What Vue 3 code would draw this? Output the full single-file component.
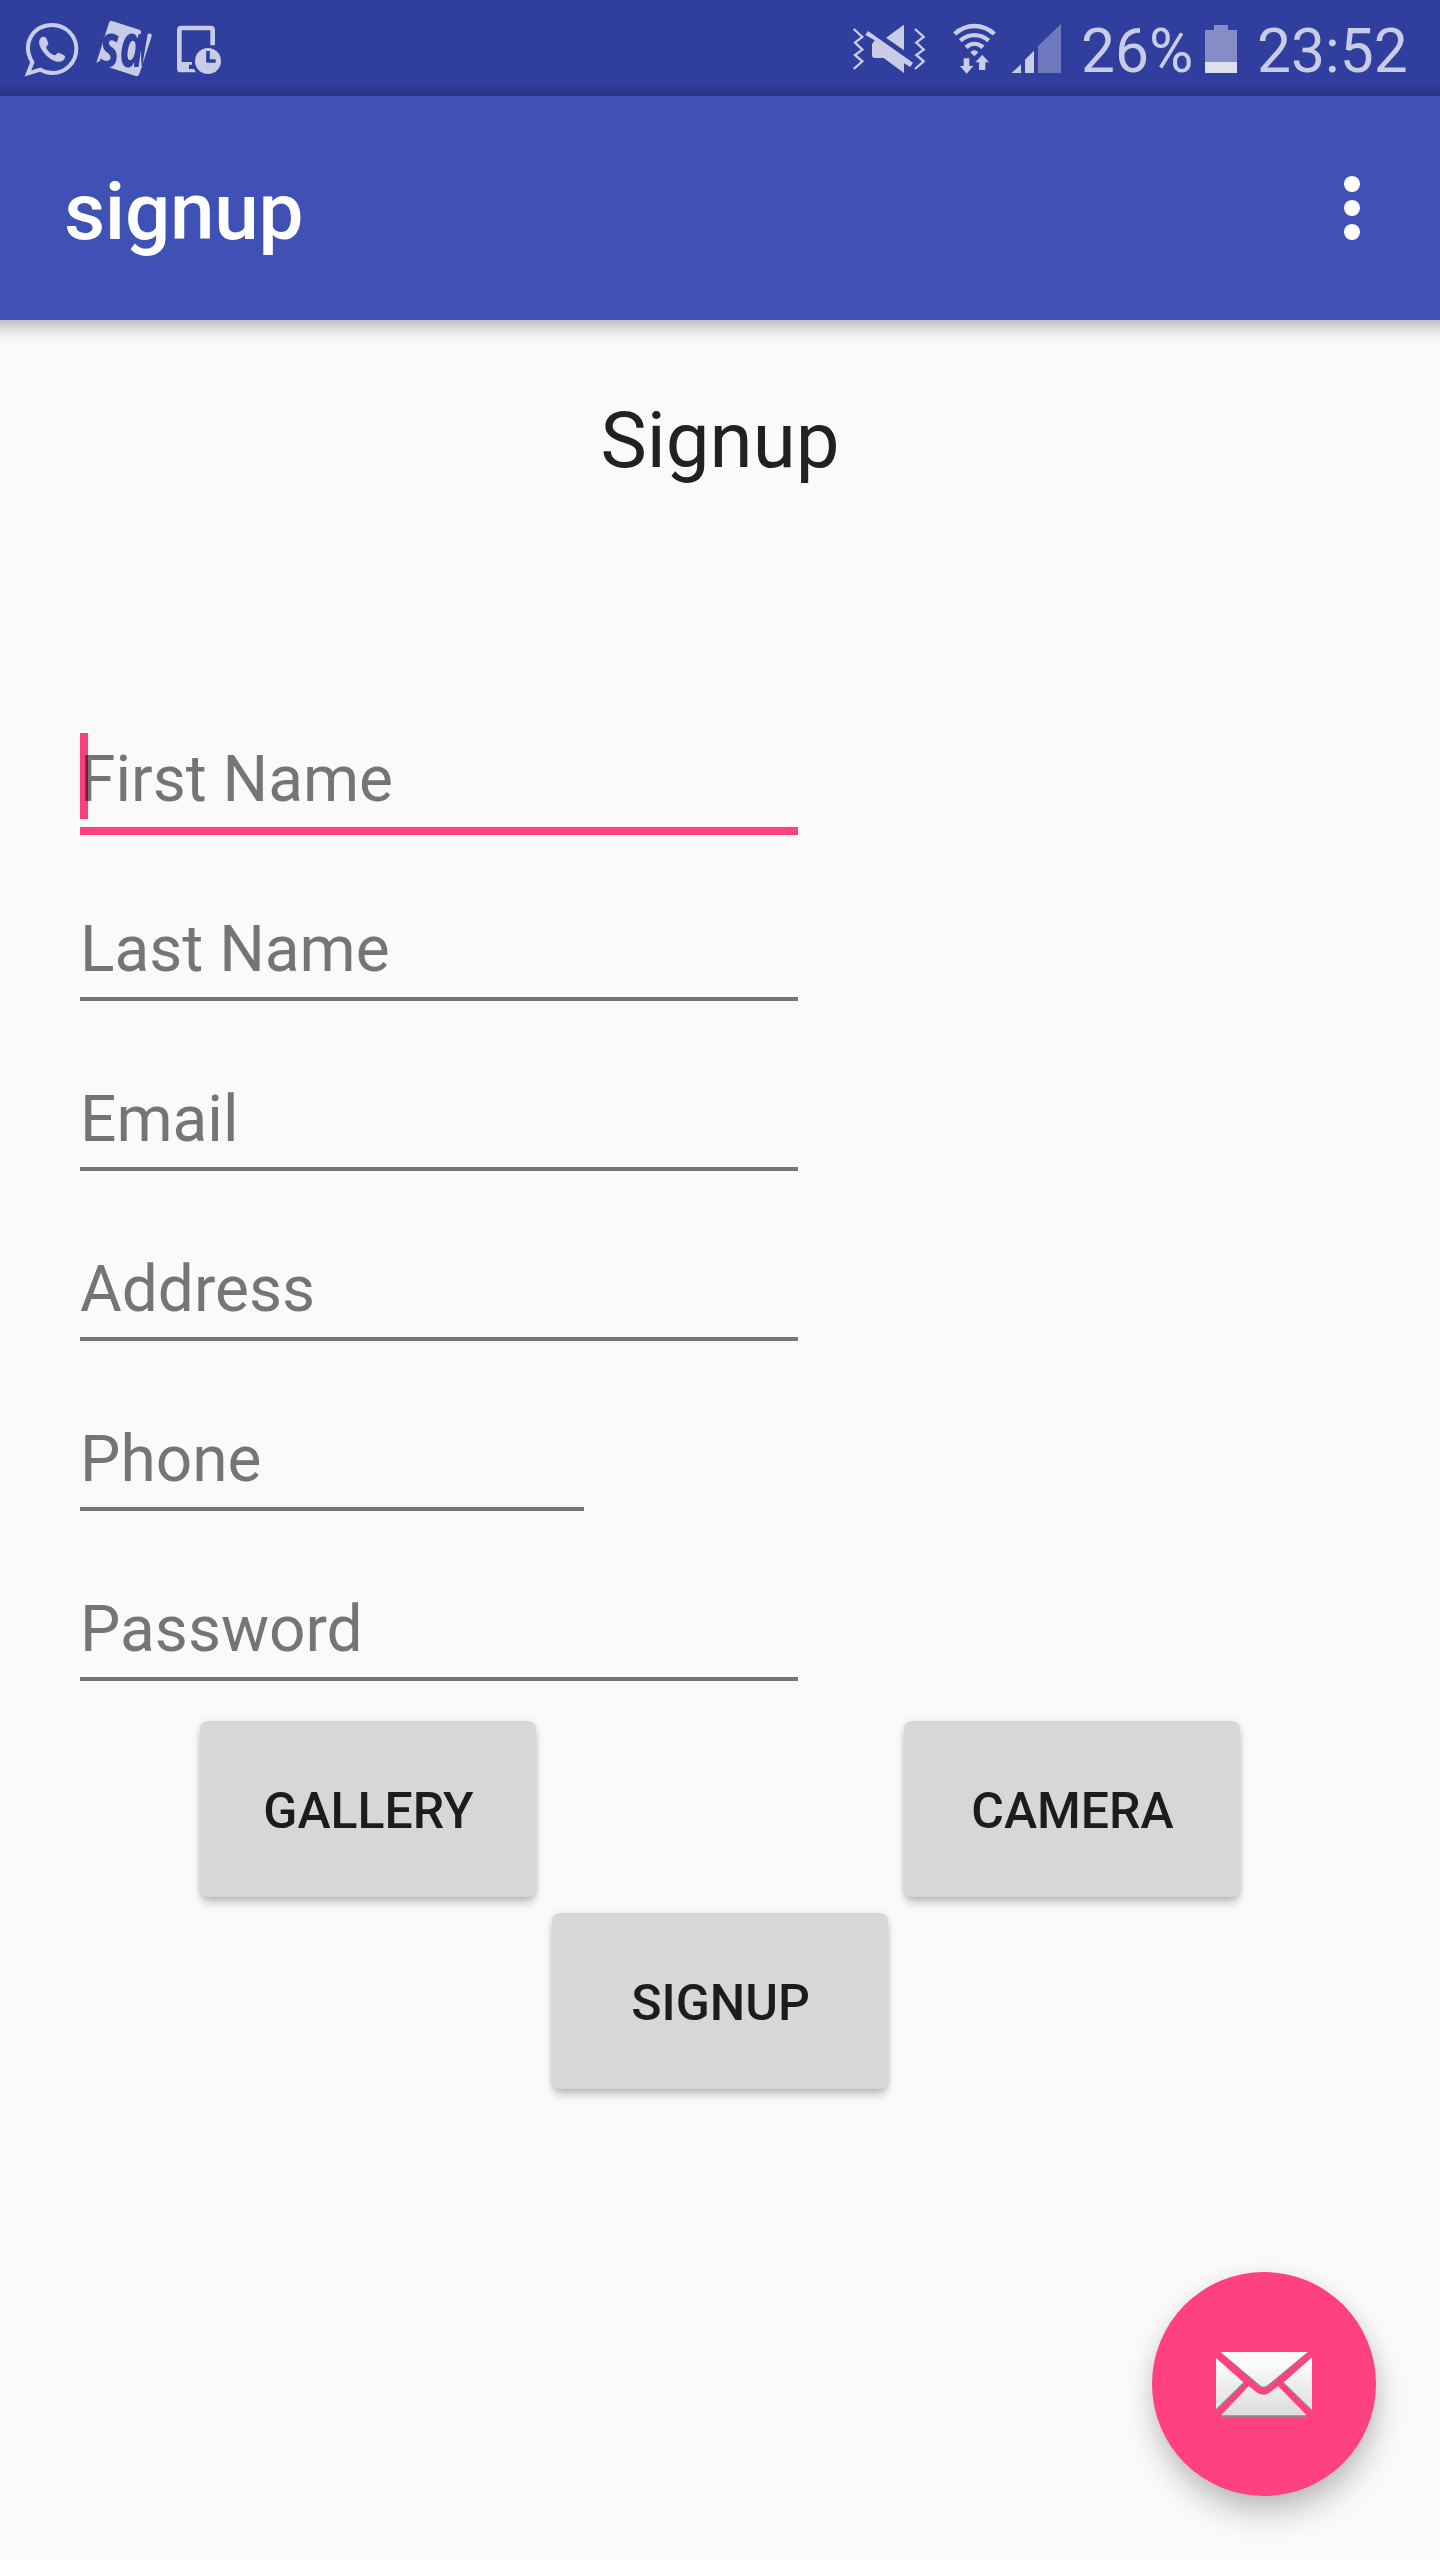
<script setup>
import { ref } from 'vue'

const fields = ref([
  { name: 'firstName', label: 'First Name', focused: true },
  { name: 'lastName', label: 'Last Name' },
  { name: 'email', label: 'Email' },
  { name: 'address', label: 'Address' },
  { name: 'phone', label: 'Phone', short: true },
  { name: 'password', label: 'Password' },
])
</script>

<template>
  <div class="screen">
    <header class="status">
      <div class="status-left">
        <svg class="whatsapp" viewBox="72 60 168 174" width="56" height="58">
          <path d="M84 220L97 187C62 126 104 75 157 75C198 75 229 108 229 147C229 188 196 219 157 219C143 219 132 216 121 209Z" fill="none" stroke="#c9cce7" stroke-width="12" />
          <path d="M122 114C128 108 137 110 140 117L145 130C146 135 137 140 139 144C145 156 153 162 163 166C168 167 171 157 176 158L192 166C198 170 194 179 187 183C172 190 151 179 137 164C121 147 111 127 122 114Z" fill="#c9cce7" />
        </svg>
        <svg class="sd" viewBox="282 57 180 177" width="60" height="59">
          <path d="M336 63L418 89Q424 91 423 96L421 112L425 206L443 103Q445 99 452 101Q457 103 455 109L418 222Q415 230 407 228L322 200L326 191L303 180L289 189L327 68Q330 61 336 63Z" fill="#c9cce7" />
          <text x="300" y="200" textLength="132" lengthAdjust="spacingAndGlyphs" class="sd-letters">sa</text>
        </svg>
        <svg class="device" viewBox="525 69 144 156" width="48" height="52">
          <path d="M538 188V90Q538 84 544 84H632Q638 84 638 90V136" fill="none" stroke="#c9cce7" stroke-width="14" />
          <path d="M531 186H576V194H567V207H583V211L589 217H542Q531 217 531 206Z" fill="#c9cce7" />
          <circle cx="624" cy="183" r="39" fill="#c9cce7" />
          <path d="M624 153V183H647" fill="none" stroke="#303e9e" stroke-width="11" />
        </svg>
      </div>
      <div class="status-right">
        <svg class="mute" viewBox="36 66 222 156" width="74" height="52">
          <path d="M41 87L67 111L45 128L67 149L45 165L67 184L41 207M225 87L251 111L229 128L251 149L229 165L251 184L225 207" fill="none" stroke="#c9cce7" stroke-width="7" />
          <path d="M192 74V151L138 113ZM104 121L96 133V165Q96 174 105 174H131L192 219V190L211 201L219 188L84 93L76 105Z" fill="#c9cce7" />
        </svg>
        <svg class="wifi" viewBox="336 66 135 159" width="45" height="53">
          <g fill="none" stroke="#c9cce7" stroke-width="13">
            <path d="M344 102C379 70 428 70 463 102" />
            <path d="M361 122C386 100 421 100 446 122" />
            <path d="M378 142C394 128 413 128 429 142" />
          </g>
          <path d="M391 157Q403 145 415 157L403 169ZM371 175H388V198H400L380 221L360 198H371ZM427 164L447 187H436V210H417V187H406Z" fill="#c9cce7" />
        </svg>
        <svg class="signal" viewBox="513 69 153 153" width="51" height="51">
          <path d="M515 219L543 193V219ZM555 219V179L582 152V219Z" fill="#c9cce7" />
          <path d="M594 219V138L663 72V219Z" fill="#6f79bd" />
        </svg>
        <span class="percent">26%</span>
        <svg class="battery" viewBox="0 0 32 48" width="32" height="48">
          <path d="M9 0H23V5H32V37H0V5H9Z" fill="#858dc6" />
          <path d="M0 37H32V48H0Z" fill="#dee0f0" />
        </svg>
        <span class="clock">23:52</span>
      </div>
    </header>

    <div class="appbar">
      <h1 class="appbar-title">signup</h1>
      <button class="overflow" aria-label="More options"><i></i><i></i><i></i></button>
    </div>

    <main class="content">
      <h2 class="heading">Signup</h2>
      <form class="form" @submit.prevent>
        <div v-for="f in fields" :key="f.name" class="field" :class="{ focused: f.focused, short: f.short }">
          <label class="label">{{ f.label }}</label>
          <span class="line"></span>
          <span v-if="f.focused" class="caret"></span>
        </div>
        <div class="buttons">
          <div class="pair">
            <button class="btn">GALLERY</button>
            <button class="btn">CAMERA</button>
          </div>
          <button class="btn">SIGNUP</button>
        </div>
      </form>
      <button class="fab" aria-label="Send mail">
        <svg viewBox="255 300 294 207" width="98" height="69">
          <defs>
            <linearGradient id="paper" gradientUnits="userSpaceOnUse" x1="0" y1="340" x2="0" y2="500">
              <stop offset="0" stop-color="#fafafa" />
              <stop offset="1" stop-color="#dcdcdc" />
            </linearGradient>
          </defs>
          <g fill="#9b8088" transform="translate(0 3)">
            <path d="M272 305H533L414 408Q401 418 388 408Z" />
            <path d="M272 500L356 408L382 428Q401 440 418 428L444 408L530 500Z" />
            <path d="M258 326L342 398L258 480ZM546 324L460 398L546 482Z" />
          </g>
          <g fill="url(#paper)">
            <path d="M272 306H533L412 406Q401 414 390 406Z" />
            <path d="M273 496L356 408L382 428Q401 440 418 428L444 408L530 496Z" />
            <path d="M258 324L340 397L258 477ZM546 322L461 397L546 479Z" />
          </g>
        </svg>
      </button>
    </main>
  </div>
</template>

<style>
body {
  margin: 0;
  background: #fafafa;
}
</style>

<style scoped>
.screen {
  width: 1440px;
  height: 2560px;
  display: flex;
  flex-direction: column;
  background: #fafafa;
  font-family: Roboto, "Liberation Sans", sans-serif;
  overflow: hidden;
}
button {
  border: 0;
  padding: 0;
  font-family: inherit;
}
svg {
  display: block;
  flex: none;
}
.status {
  height: 96px;
  flex: none;
  display: flex;
  justify-content: space-between;
  background: linear-gradient(#303e9e 82px, #2e3b96 88px, #28347f 96px);
}
.status-left,
.status-right {
  display: flex;
  align-items: flex-start;
}
.whatsapp { margin: 20px 0 0 24px; }
.sd {
  margin: 19px 0 0 14px;
  overflow: visible;
}
.device { margin: 23px 0 0 21px; }
.sd-letters {
  font: italic 700 185px "Open Sans", sans-serif;
  fill: #303e9e;
}
.mute { margin: 22px 26px 0 0; }
.wifi { margin: 22px 14px 0 0; }
.signal { margin-top: 23px; }
.percent,
.clock {
  color: #c9cce7;
  font-size: 60.5px;
  line-height: 72px;
  margin-top: 16px;
  white-space: nowrap;
}
.percent {
  width: 126px;
  margin-left: 19px;
}
.battery { margin: 25px 0 0 -2px; }
.clock {
  width: 183px;
  margin-left: 20px;
}
.appbar {
  height: 224px;
  flex: none;
  display: flex;
  justify-content: space-between;
  align-items: center;
  padding: 0 80px 0 64px;
  box-sizing: border-box;
  background: #3f51b5;
}
.appbar-title {
  margin: 8px 0 0;
  color: #fff;
  font-size: 80px;
  font-weight: 500;
  letter-spacing: -0.3px;
  line-height: 94px;
}
.overflow {
  display: flex;
  flex-direction: column;
  gap: 8px;
  background: none;
}
.overflow i {
  width: 16px;
  height: 16px;
  border-radius: 50%;
  background: #fff;
}
.content {
  flex: 1;
  display: flex;
  flex-direction: column;
  background: linear-gradient(#c2c2c2, #d8d8d8 7px, #eee 15px, #f8f8f8 23px, #fafafa 30px);
}
.heading {
  margin: 74px 0 0;
  text-align: center;
  color: #212121;
  font-size: 78px;
  font-weight: 400;
  line-height: 94px;
}
.form {
  margin-top: 205px;
}
.field {
  position: relative;
  height: 170px;
  width: 718px;
  margin-left: 80px;
  padding-top: 49px;
  box-sizing: border-box;
  display: flex;
  flex-direction: column;
}
.field.short {
  width: 504px;
}
.label {
  color: #757575;
  font-size: 64px;
  line-height: 76px;
}
.line {
  margin-top: 9px;
  height: 4px;
  background: #757575;
}
.focused .line {
  height: 8px;
  background: #ff4081;
}
.caret {
  position: absolute;
  left: 0;
  top: 40px;
  width: 8px;
  height: 86px;
  background: #ff4081;
  mix-blend-mode: multiply;
}
.buttons {
  display: flex;
  flex-direction: column;
  align-items: center;
  gap: 16px;
  padding-top: 8px;
}
.pair {
  display: flex;
  gap: 368px;
}
.btn {
  width: 336px;
  height: 176px;
  border-radius: 8px;
  background: #d6d8d7;
  color: #1c1c1c;
  font-size: 50px;
  font-weight: 500;
  line-height: 60px;
  padding: 4px 0 0 1px;
  box-shadow: 0 6px 9px -1px rgba(0, 0, 0, 0.25), 0 0 6px rgba(0, 0, 0, 0.08);
}
.fab {
  width: 224px;
  height: 224px;
  margin: auto 64px 64px auto;
  border-radius: 50%;
  background: #ff4081;
  display: flex;
  align-items: center;
  justify-content: center;
  box-shadow: 2px 18px 32px -2px rgba(0, 0, 0, 0.24), 0 2px 20px rgba(0, 0, 0, 0.06);
}
</style>
